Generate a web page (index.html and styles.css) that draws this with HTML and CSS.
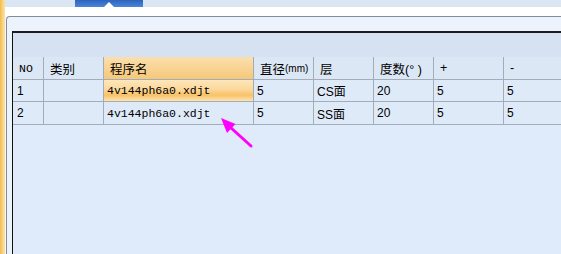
FILE: index.html
```html
<!DOCTYPE html>
<html>
<head>
<meta charset="utf-8">
<link rel="stylesheet" href="styles.css">
</head>
<body>
<div class="app">
  <div class="edge"></div>
  <div class="main">
    <div class="topbar"><div class="tab"><span class="notch"></span></div></div>
    <div class="whitebar"></div>
    <div class="panel">
      <div class="grid">
        <div class="band"></div>
        <div class="row head">
          <div class="cell c-no">NO</div>
          <div class="cell c-type">类别</div>
          <div class="cell c-name sel-head">程序名</div>
          <div class="cell c-dia">直径<span class="unit">(mm)</span></div>
          <div class="cell c-layer">层</div>
          <div class="cell c-deg">度数(°&nbsp;)</div>
          <div class="cell c-plus">+</div>
          <div class="cell c-minus">-</div>
        </div>
        <div class="row data r1">
          <div class="cell c-no">1</div>
          <div class="cell c-type"></div>
          <div class="cell c-name sel-cell"><span class="fname">4v144ph6a0.xdjt</span></div>
          <div class="cell c-dia">5</div>
          <div class="cell c-layer">CS面</div>
          <div class="cell c-deg">20</div>
          <div class="cell c-plus">5</div>
          <div class="cell c-minus">5</div>
        </div>
        <div class="row data r2">
          <div class="cell c-no">2</div>
          <div class="cell c-type"></div>
          <div class="cell c-name"><span class="fname">4v144ph6a0.xdjt</span></div>
          <div class="cell c-dia">5</div>
          <div class="cell c-layer">SS面</div>
          <div class="cell c-deg">20</div>
          <div class="cell c-plus">5</div>
          <div class="cell c-minus">5</div>
        </div>
      </div>
    </div>
  </div>
  <svg class="arrow" width="561" height="254" viewBox="0 0 561 254">
    <line x1="251" y1="146" x2="230" y2="127" stroke="#ff00ff" stroke-width="3" stroke-linecap="round"/>
    <polygon points="221,118 235.5,124 227,133" fill="#ff00ff"/>
  </svg>
</div>
</body>
</html>
```

FILE: styles.css
```css
html, body {
  margin: 0;
  padding: 0;
}
body {
  width: 561px;
  height: 254px;
  overflow: hidden;
  background: #dfeafa;
  font-family: "Liberation Sans", "Noto Sans CJK SC", sans-serif;
  font-size: 12px;
  color: #000;
}
.app {
  position: relative;
  display: flex;
  height: 254px;
}
.edge {
  width: 5px;
  flex: none;
  background: linear-gradient(to right, #f0bb52, #f8d27c 50%, #fbe2a6);
}
.main {
  flex: 1;
  display: flex;
  flex-direction: column;
  background: #f3f7fc;
  min-width: 0;
}
.topbar {
  height: 7px;
  flex: none;
  background: #dbe6f4;
}
.tab {
  position: relative;
  margin-left: 70px;
  width: 68px;
  height: 7px;
  background: linear-gradient(to bottom, #2d63bf, #4a86d8);
}
.notch {
  position: absolute;
  left: 29px;
  bottom: 0;
  width: 0;
  height: 0;
  border-left: 5px solid transparent;
  border-right: 5px solid transparent;
  border-bottom: 5px solid #ffffff;
}
.whitebar {
  height: 9px;
  flex: none;
  background: #ffffff;
}
.panel {
  flex: 1;
  display: flex;
  margin-left: 1px;
  padding: 14px 0 0 5px;
  border-top: 1px solid #808c9c;
  border-left: 1px solid #808c9c;
  border-top-left-radius: 4px;
  background: #edf3fc;
}
.grid {
  flex: 1;
  display: flex;
  flex-direction: column;
  border-top: 2px solid #1c1c1c;
  border-left: 1px solid #111;
  background: #dfeafa;
}
.band {
  height: 24px;
  flex: none;
  background: #d6e2f1;
}
.row {
  display: flex;
  flex: none;
  border-bottom: 1px solid #a3adba;
}
.head {
  height: 22px;
  background: #dce7f5;
}
.r1 {
  height: 21px;
}
.r2 {
  height: 22px;
}
.data {
  background: #dfeaf9;
}
.cell {
  box-sizing: border-box;
  flex: none;
  display: flex;
  align-items: center;
  border-right: 1px solid #a3adba;
  padding-left: 3px;
  white-space: nowrap;
}
.head .cell {
  padding-left: 6px;
  font-size: 12.5px;
}
.head .c-no {
  font-family: "Liberation Mono", monospace;
  font-size: 11.5px;
  padding-left: 6px;
}
.data .c-no {
  padding-left: 4px;
}
.c-no { width: 31px; }
.c-type { width: 60px; }
.c-name { width: 150px; }
.c-dia { width: 60px; }
.c-layer { width: 60px; }
.c-deg { width: 60px; }
.c-plus { width: 70px; }
.c-minus { flex: 1; border-right: none; }
.unit {
  font-size: 10px;
}
.fname {
  font-family: "Liberation Mono", monospace;
  font-size: 11.5px;
}
.sel-head {
  background: linear-gradient(to bottom, #fadfae, #f6c879);
}
.sel-cell {
  background: linear-gradient(to bottom, #fde7bd 0%, #fcd79a 45%, #f8c267 72%, #fde4b3 100%);
}
.arrow {
  position: absolute;
  left: 0;
  top: 0;
  pointer-events: none;
}
```
